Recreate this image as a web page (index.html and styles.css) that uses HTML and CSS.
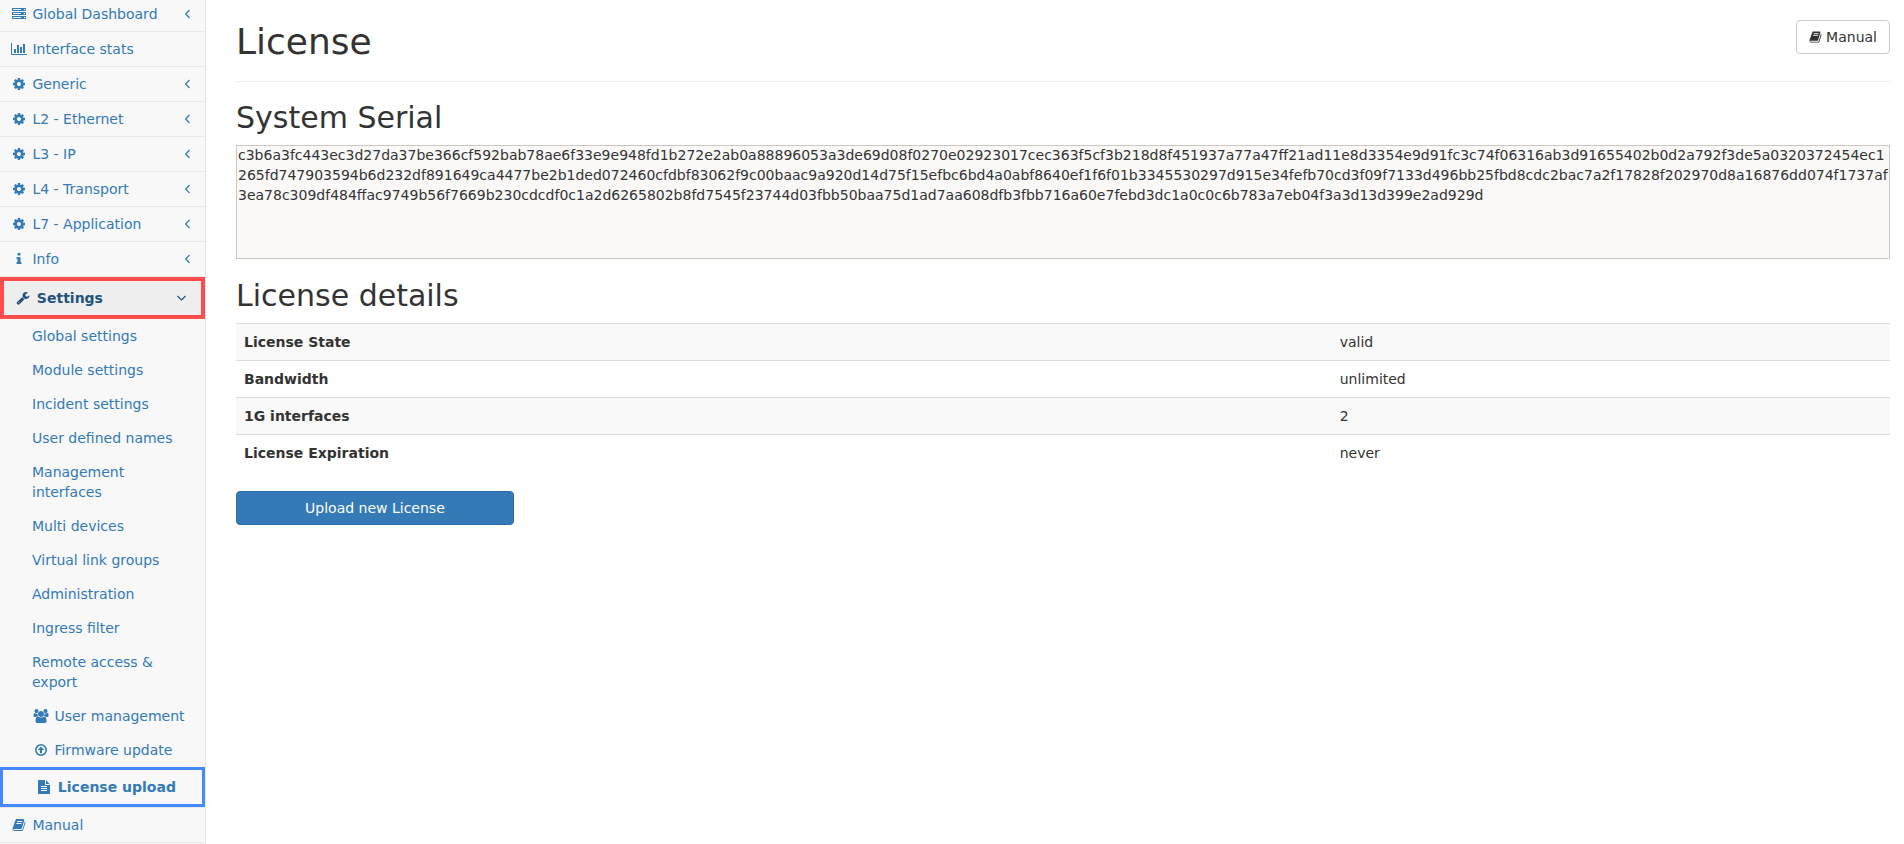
FILE: index.html
```html
<!DOCTYPE html>
<html lang="en">
<head>
  <meta charset="UTF-8">
  <meta name="viewport" content="width=device-width, initial-scale=1">
  <title>License</title>
  <link rel="stylesheet" href="styles.css">
</head>
<body>
  <!-- icon set -->
  <svg class="sprite" aria-hidden="true">
    <symbol id="i-server" viewBox="0 0 1792 1792"><path fill-rule="evenodd" d="M128 1408h1024v-128h-1024v128zm0-512h1024v-128h-1024v128zm1568 448q0-40-28-68t-68-28-68 28-28 68 28 68 68 28 68-28 28-68zm-1568-960h1024v-128h-1024v128zm1568 448q0-40-28-68t-68-28-68 28-28 68 28 68 68 28 68-28 28-68zm0-512q0-40-28-68t-68-28-68 28-28 68 28 68 68 28 68-28 28-68zm96 832v384h-1792v-384h1792zm0-512v384h-1792v-384h1792zm0-512v384h-1792v-384h1792z"/></symbol>
    <symbol id="i-chart" viewBox="0 0 2048 1792"><path d="M640 896v512h-256v-512h256zm384-512v1024h-256v-1024h256zm1024 1152v128h-2048v-1536h128v1408h1920zm-640-896v768h-256v-768h256zm384-384v1152h-256v-1152h256z"/></symbol>
    <symbol id="i-cog" viewBox="0 0 1792 1792"><path d="M1152 896q0-106-75-181t-181-75-181 75-75 181 75 181 181 75 181-75 75-181zm512-109v222q0 12-8 23t-20 13l-185 28q-19 54-39 91 35 50 107 138 10 12 10 25t-9 23q-27 37-99 108t-94 71q-12 0-26-9l-138-108q-44 23-91 38-16 136-29 186-7 28-36 28h-222q-14 0-24.500-8.500t-11.500-21.500l-28-184q-49-16-90-37l-141 107q-10 9-25 9-14 0-25-11-126-114-165-168-7-10-7-23 0-12 8-23 15-21 51-66.500t54-70.500q-27-50-41-99l-183-27q-13-2-21-12.500t-8-23.500v-222q0-12 8-23t19-13l186-28q14-46 39-92-40-57-107-138-10-12-10-24 0-10 9-23 26-36 98.500-107.500t94.500-71.500q13 0 26 10l138 107q44-23 91-38 16-136 29-186 7-28 36-28h222q14 0 24.500 8.500t11.500 21.500l28 184q49 16 90 37l142-107q9-9 24-9 13 0 25 10 129 119 165 170 7 8 7 22 0 12-8 23-15 21-51 66.500t-54 70.500q26 50 41 98l183 28q13 2 21 12.500t8 23.500z"/></symbol>
    <symbol id="i-info" viewBox="0 0 1792 1792"><path d="M1216 1344v128q0 26-19 45t-45 19h-512q-26 0-45-19t-19-45v-128q0-26 19-45t45-19h64v-384h-64q-26 0-45-19t-19-45v-128q0-26 19-45t45-19h384q26 0 45 19t19 45v576h64q26 0 45 19t19 45zm-128-1152v192q0 26-19 45t-45 19h-256q-26 0-45-19t-19-45v-192q0-26 19-45t45-19h256q26 0 45 19t19 45z"/></symbol>
    <symbol id="i-wrench" viewBox="0 0 1792 1792"><path d="M448 1472q0-26-19-45t-45-19-45 19-19 45 19 45 45 19 45-19 19-45zm644-420l-682 682q-37 37-90 37-52 0-91-37l-106-108q-38-36-38-90 0-53 38-91l681-681q39 98 114.500 173.500t173.500 114.500zm634-435q0 39-23 106-47 134-164.500 217.500t-258.500 83.500q-185 0-316.500-131.500t-131.500-316.500 131.500-316.500 316.500-131.500q58 0 121.500 16.500t107.500 46.500q16 11 16 28t-16 28l-293 169v224l193 107q5-3 79-48.500t135.500-81 70.500-35.500q15 0 23.500 10t8.500 25z"/></symbol>
    <symbol id="i-users" viewBox="0 0 1920 1792"><path d="M593 896q-162 5-265 128h-134q-82 0-138-40.500t-56-118.500q0-353 124-353 6 0 43.500 21t97.500 42.500 119 21.500q67 0 133-23-5 37-5 66 0 159 93 292zm1071 637q0 120-73 189.500t-194 69.500h-874q-121 0-194-69.500t-73-189.500q0-53 3.500-103.500t14-109 26.500-108.500 43-97.500 62-81 85.500-53.500 111.500-20q10 0 43 21.500t73 48 107 48 135 21.500 135-21.500 107-48 73-48 43-21.500q61 0 111.500 20t85.500 53.500 62 81 43 97.500 26.500 108.500 14 109 3.500 103.500zm-1024-1277q0 106-75 181t-181 75-181-75-75-181 75-181 181-75 181 75 75 181zm704 384q0 159-112.500 271.500t-271.500 112.500-271.500-112.500-112.500-271.500 112.500-271.500 271.500-112.500 271.500 112.500 112.500 271.500zm576 225q0 78-56 118.500t-138 40.500h-134q-103-123-265-128 93-133 93-292 0-29-5-66 66 23 133 23 59 0 119-21.500t97.500-42.500 43.500-21q124 0 124 353zm-128-609q0 106-75 181t-181 75-181-75-75-181 75-181 181-75 181 75 75 181z"/></symbol>
    <symbol id="i-up" viewBox="0 0 14 14"><circle cx="7" cy="7" r="5.200" fill="none" stroke="currentColor" stroke-width="1.600"/><path d="M7 3.500L10.300 7H8v3.200H6V7H3.700z"/></symbol>
    <symbol id="i-file" viewBox="0 0 1792 1792"><path d="M1596 476q14 14 28 36h-472v-472q22 14 36 28zm-476 164h544v1056q0 40-28 68t-68 28h-1344q-40 0-68-28t-28-68v-1600q0-40 28-68t68-28h800v544q0 40 28 68t68 28zm160 736v-64q0-14-9-23t-23-9h-704q-14 0-23 9t-9 23v64q0 14 9 23t23 9h704q14 0 23-9t9-23zm0-256v-64q0-14-9-23t-23-9h-704q-14 0-23 9t-9 23v64q0 14 9 23t23 9h704q14 0 23-9t9-23zm0-256v-64q0-14-9-23t-23-9h-704q-14 0-23 9t-9 23v64q0 14 9 23t23 9h704q14 0 23-9t9-23z"/></symbol>
    <symbol id="i-book" viewBox="0 0 1792 1792"><path d="M1703 478q40 57 18 129l-275 906q-19 64-76.500 107.500t-122.500 43.500h-923q-77 0-148.500-53.500t-99.500-131.500q-24-67-2-127 0-4 3-27t4-37q1-8-3-21.500t-3-19.500q2-11 8-21t16.500-23.500 16.500-23.500q23-38 45-91.500t30-91.500q3-10 .5-30t-.5-28q3-11 17-28t17-23q21-36 42-92t25-90q1-9-2.500-32t.5-28q4-13 22-30.500t22-22.500q19-26 42.500-84.500t27.500-96.500q1-8-3-25.500t-2-26.500q2-8 9-18t18-23 17-21q8-12 16.500-30.500t15-35 16-36 19.500-32 26.500-23.500 36-11.500 47.500 5.500l-1 3q38-9 51-9h761q74 0 114 56t18 130l-274 906q-36 119-71.500 153.500t-128.500 34.500h-869q-27 0-38 15-11 16-1 43 24 70 144 70h923q29 0 56-15.500t35-41.500l300-987q7-22 5-57 38 15 59 43zm-1064 2q-4 13 2 22.500t20 9.500h608q13 0 25.500-9.500t16.500-22.500l21-64q4-13-2-22.500t-20-9.500h-608q-13 0-25.500 9.500t-16.500 22.500zm-83 256q-4 13 2 22.500t20 9.500h608q13 0 25.500-9.500t16.500-22.500l21-64q4-13-2-22.500t-20-9.500h-608q-13 0-25.500 9.500t-16.500 22.500z"/></symbol>
    <symbol id="i-left" viewBox="0 0 5 20"><path d="M4.500 6L.7 10l3.800 4" fill="none" stroke="currentColor" stroke-width="1.200"/></symbol>
    <symbol id="i-down" viewBox="0 0 9 20"><path d="M.5 8l4 4 4-4" fill="none" stroke="currentColor" stroke-width="1.200"/></symbol>
  </svg>

  <nav class="sidebar">
    <ul class="menu">
      <li><a href="#"><svg class="icon"><use href="#i-server"/></svg> Global Dashboard<svg class="arrow"><use href="#i-left"/></svg></a></li>
      <li><a href="#"><svg class="icon"><use href="#i-chart"/></svg> Interface stats</a></li>
      <li><a href="#"><svg class="icon"><use href="#i-cog"/></svg> Generic<svg class="arrow"><use href="#i-left"/></svg></a></li>
      <li><a href="#"><svg class="icon"><use href="#i-cog"/></svg> L2 - Ethernet<svg class="arrow"><use href="#i-left"/></svg></a></li>
      <li><a href="#"><svg class="icon"><use href="#i-cog"/></svg> L3 - IP<svg class="arrow"><use href="#i-left"/></svg></a></li>
      <li><a href="#"><svg class="icon"><use href="#i-cog"/></svg> L4 - Transport<svg class="arrow"><use href="#i-left"/></svg></a></li>
      <li><a href="#"><svg class="icon"><use href="#i-cog"/></svg> L7 - Application<svg class="arrow"><use href="#i-left"/></svg></a></li>
      <li><a href="#"><svg class="icon"><use href="#i-info"/></svg> Info<svg class="arrow"><use href="#i-left"/></svg></a></li>
      <li>
        <a href="#" class="open"><svg class="icon"><use href="#i-wrench"/></svg> Settings<svg class="arrow arrow-down"><use href="#i-down"/></svg></a>
        <ul class="submenu">
          <li><a href="#">Global settings</a></li>
          <li><a href="#">Module settings</a></li>
          <li><a href="#">Incident settings</a></li>
          <li><a href="#">User defined names</a></li>
          <li><a href="#">Management interfaces</a></li>
          <li><a href="#">Multi devices</a></li>
          <li><a href="#">Virtual link groups</a></li>
          <li><a href="#">Administration</a></li>
          <li><a href="#">Ingress filter</a></li>
          <li><a href="#">Remote access &amp; export</a></li>
          <li><a href="#"><svg class="icon"><use href="#i-users"/></svg> User management</a></li>
          <li><a href="#"><svg class="icon"><use href="#i-up"/></svg> Firmware update</a></li>
          <li><a href="#" class="current"><svg class="icon"><use href="#i-file"/></svg> License upload</a></li>
        </ul>
      </li>
      <li><a href="#"><svg class="icon"><use href="#i-book"/></svg> Manual</a></li>
    </ul>
  </nav>

  <main class="content">
    <header class="page-header">
      <h1>License</h1>
      <button type="button" class="btn btn-default"><svg class="btn-icon"><use href="#i-book"/></svg> Manual</button>
    </header>

    <h2><label for="serial">System Serial</label></h2>
    <textarea id="serial" class="serial" spellcheck="false" readonly>c3b6a3fc443ec3d27da37be366cf592bab78ae6f33e9e948fd1b272e2ab0a88896053a3de69d08f0270e02923017cec363f5cf3b218d8f451937a77a47ff21ad11e8d3354e9d91fc3c74f06316ab3d91655402b0d2a792f3de5a0320372454ec1265fd747903594b6d232df891649ca4477be2b1ded072460cfdbf83062f9c00baac9a920d14d75f15efbc6bd4a0abf8640ef1f6f01b3345530297d915e34fefb70cd3f09f7133d496bb25fbd8cdc2bac7a2f17828f202970d8a16876dd074f1737af3ea78c309df484ffac9749b56f7669b230cdcdf0c1a2d6265802b8fd7545f23744d03fbb50baa75d1ad7aa608dfb3fbb716a60e7febd3dc1a0c0c6b783a7eb04f3a3d13d399e2ad929d</textarea>

    <h2>License details</h2>
    <table class="details">
      <tbody>
        <tr><th scope="row">License State</th><td>valid</td></tr>
        <tr><th scope="row">Bandwidth</th><td>unlimited</td></tr>
        <tr><th scope="row">1G interfaces</th><td>2</td></tr>
        <tr><th scope="row">License Expiration</th><td>never</td></tr>
      </tbody>
    </table>

    <button type="button" class="btn btn-primary">Upload new License</button>
  </main>
</body>
</html>
```
FILE: styles.css
```css
* {
  box-sizing: border-box;
}
body {
  margin: 0;
  display: flex;
  min-height: 100vh;
  font-family: "DejaVu Sans", Verdana, sans-serif;
  font-size: 14px;
  line-height: 20px;
  color: #333;
  background: #fff;
}
.sprite {
  display: none;
}

/* sidebar */
.sidebar {
  flex: none;
  width: 206px;
  background: #f8f8f8;
  border-right: 1px solid #e7e7e7;
}
.menu,
.submenu {
  list-style: none;
  margin: 0;
  padding: 0;
}
.menu {
  margin-top: -3px;
}
.menu > li {
  border-bottom: 1px solid #e7e7e7;
}
.menu a {
  display: block;
  padding: 7px 15px 7px 10px;
  color: #337ab7;
  text-decoration: none;
}
.submenu a {
  padding-left: 32px;
}
.icon {
  width: 18px;
  height: 14px;
  fill: currentColor;
  vertical-align: -2px;
}
.arrow {
  float: right;
  width: 5px;
  height: 20px;
}
.arrow-down {
  width: 9px;
}
.menu a.open {
  border: 4px solid #ff4c4c;
  background: #eee;
  color: #23527c;
  font-weight: bold;
}
.menu a.current {
  border: 3px solid #4489ff;
  font-weight: bold;
}

/* content */
.content {
  flex: 1;
  min-width: 0;
  padding: 20px 14px 20px 30px;
}
.page-header {
  display: flex;
  justify-content: space-between;
  align-items: flex-start;
  padding-bottom: 17px;
  border-bottom: 1px solid #eee;
}
h1,
h2 {
  margin: 0;
  font-weight: normal;
}
h1 {
  font-size: 36px;
  line-height: 44px;
}
h2 {
  margin: 20px 0 11px;
  font-size: 30px;
  line-height: 32px;
}
.serial {
  display: block;
  width: 100%;
  height: 114px;
  margin-bottom: 21px;
  padding: 0 2px;
  border: 0;
  box-shadow: inset 0 0 0 1px #cdc7c2;
  background: #faf9f8;
  color: #333;
  font: inherit;
  overflow: hidden;
  resize: none;
}
.details {
  width: 100%;
  margin-bottom: 20px;
  border-collapse: collapse;
}
.details th,
.details td {
  padding: 8px;
  border-top: 1px solid #ddd;
  text-align: left;
}
.details tr:nth-child(odd) {
  background: #f9f9f9;
}

.btn {
  padding: 6px 12px;
  border: 1px solid transparent;
  border-radius: 4px;
  font: inherit;
  cursor: pointer;
}
.btn-default {
  border-color: #ccc;
  background: #fff;
  color: #333;
}
.btn-primary {
  width: 16.8%;
  border-color: #2e6da4;
  background: #337ab7;
  color: #fff;
}
.btn-icon {
  width: 13px;
  height: 14px;
  fill: currentColor;
  vertical-align: -2px;
}
```
